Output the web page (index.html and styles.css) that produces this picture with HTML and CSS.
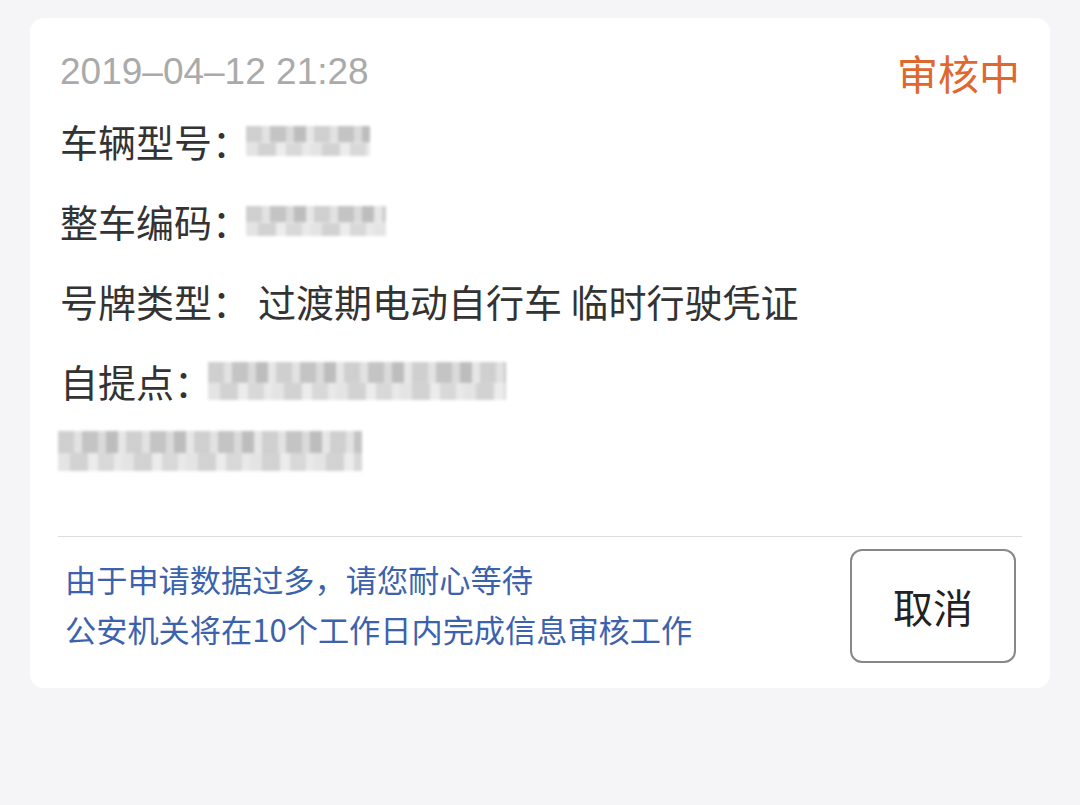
FILE: index.html
```html
<!DOCTYPE html>
<html lang="zh-CN">
<head>
<meta charset="utf-8">
<title>审核中</title>
<link rel="stylesheet" href="styles.css">
</head>
<body>
<div class="card">
  <div class="head">
    <span class="date">2019–04–12 21:28</span>
    <span class="status">审核中</span>
  </div>
  <div class="row"><span class="label">车辆型号：</span><span class="blur b1"></span></div>
  <div class="row"><span class="label">整车编码：</span><span class="blur b2"></span></div>
  <div class="row"><span class="label">号牌类型：</span><span class="value">过渡期电动自行车 临时行驶凭证</span></div>
  <div class="row"><span class="label">自提点：</span><span class="blur b4"></span></div>
  <div class="row cont"><span class="blur b5"></span></div>
  <div class="divider"></div>
  <div class="foot">
    <div class="notice">
      <div>由于申请数据过多，请您耐心等待</div>
      <div>公安机关将在10个工作日内完成信息审核工作</div>
    </div>
    <button class="cancel">取消</button>
  </div>
</div>
</body>
</html>
```

FILE: styles.css
```css
html, body {
  margin: 0;
  padding: 0;
  background: #f5f5f7;
  font-family: "Noto Sans CJK SC", "Noto Sans", sans-serif;
}
.card {
  margin: 18px 0 0 30px;
  width: 1020px;
  height: 670px;
  box-sizing: border-box;
  background: #fff;
  border-radius: 14px;
  padding: 26px 28px 0 28px;
}
.head {
  display: flex;
  justify-content: space-between;
  align-items: center;
  height: 56px;
  padding: 0 2px;
}
.date {
  font-family: "Liberation Sans", "Noto Sans", sans-serif;
  font-size: 37px;
  color: #aaaaaa;
}
.status {
  font-size: 41px;
  color: #e0672d;
}
.row {
  display: flex;
  align-items: center;
  height: 80px;
  padding-left: 2px;
  color: #333;
  font-size: 38px;
}
.row.cont {
  height: 60px;
  padding-left: 0;
}
.label { white-space: nowrap; }
.value { margin-left: 8px; }
.blur {
  display: inline-block;
  height: 30px;
  margin-top: 2px;
  filter: blur(1.5px);
  background-image:
    repeating-linear-gradient(90deg, #cfcfcf 0 16px, #e2e2e2 16px 24px, #c4c4c4 24px 40px, #dadada 40px 48px, #bdbdbd 48px 60px, #e6e6e6 60px 68px),
    repeating-linear-gradient(90deg, #e4e4e4 0 12px, #d2d2d2 12px 30px, #ececec 30px 40px, #d8d8d8 40px 56px, #e9e9e9 56px 64px);
  background-size: 100% 55%, 100% 45%;
  background-position: left top, left bottom;
  background-repeat: no-repeat;
}
.b1 { width: 124px; margin-left: -4px; }
.b2 { width: 140px; margin-left: -4px; }
.b4 { width: 298px; height: 38px; margin-left: -4px; }
.b5 { width: 304px; height: 40px; }
.divider {
  margin-top: 56px;
  height: 1px;
  background: #dcdcdc;
}
.foot {
  display: flex;
  justify-content: space-between;
  align-items: flex-start;
  padding: 12px 6px 0 7px;
}
.notice {
  padding-top: 5px;
  color: #3c62ad;
  font-size: 31.2px;
  line-height: 50px;
}
.cancel {
  width: 166px;
  height: 114px;
  box-sizing: border-box;
  border: 2px solid #888;
  border-radius: 12px;
  background: #fff;
  font-family: "Noto Sans CJK SC", sans-serif;
  font-size: 40px;
  color: #222;
  padding: 0;
}
```
